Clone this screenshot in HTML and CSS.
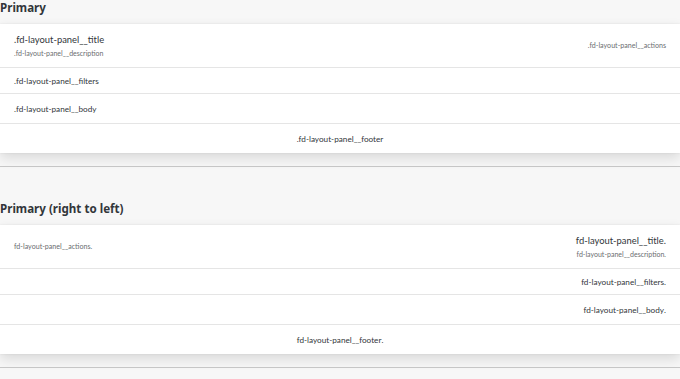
FILE: index.html
```html
<!DOCTYPE html>
<html lang="en">
<head>
  <meta charset="UTF-8">
  <title>Layout Panel</title>
  <link rel="stylesheet" href="styles.css">
</head>
<body>

<section class="example">
  <h3>Primary</h3>
  <div class="fd-layout-panel">
    <div class="fd-layout-panel__header">
      <div class="fd-layout-panel__head">
        <h4 class="fd-layout-panel__title">.fd-layout-panel__title</h4>
        <p class="fd-layout-panel__description">.fd-layout-panel__description</p>
      </div>
      <div class="fd-layout-panel__actions">.fd-layout-panel__actions</div>
    </div>
    <div class="fd-layout-panel__filters">.fd-layout-panel__filters</div>
    <div class="fd-layout-panel__body">.fd-layout-panel__body</div>
    <div class="fd-layout-panel__footer">.fd-layout-panel__footer</div>
  </div>
</section>

<section class="example">
  <h3>Primary (right to left)</h3>
  <div class="fd-layout-panel" dir="rtl">
    <div class="fd-layout-panel__header">
      <div class="fd-layout-panel__head">
        <h4 class="fd-layout-panel__title">.fd-layout-panel__title</h4>
        <p class="fd-layout-panel__description">.fd-layout-panel__description</p>
      </div>
      <div class="fd-layout-panel__actions">.fd-layout-panel__actions</div>
    </div>
    <div class="fd-layout-panel__filters">.fd-layout-panel__filters</div>
    <div class="fd-layout-panel__body">.fd-layout-panel__body</div>
    <div class="fd-layout-panel__footer">.fd-layout-panel__footer</div>
  </div>
</section>

</body>
</html>
```

FILE: styles.css
```css
body {
  font-family: 'Lato', 'Noto Sans', sans-serif;
  margin: 0;
  background: #f7f7f7;
  color: #32363a;
}
.example {
  padding-bottom: 13px;
  border-bottom: 1px solid #c8c8c8;
  margin-bottom: 34px;
}
.example h3 {
  font-family: 'Noto Sans', sans-serif;
  font-size: 11.6px;
  font-weight: 700;
  line-height: 15px;
  margin: 0 0 9px;
}
.fd-layout-panel {
  background: #fff;
  box-shadow: 0 0 2px rgba(0,0,0,0.08), 0 5px 12px rgba(0,0,0,0.12);
}
.fd-layout-panel__header {
  display: flex;
  align-items: center;
  justify-content: space-between;
  height: 43px;
  padding: 0 14px;
  border-bottom: 1px solid #e5e5e5;
}
.fd-layout-panel__title {
  margin: 0;
  font-size: 9.4px;
  font-weight: 400;
  line-height: 14px;
}
.fd-layout-panel__description {
  margin: 2px 0 0;
  font-size: 7px;
  line-height: 9px;
  color: #6a6d70;
}
.fd-layout-panel__actions {
  font-size: 7.1px;
  color: #6a6d70;
}
.fd-layout-panel__filters,
.fd-layout-panel__body,
.fd-layout-panel__footer {
  display: flex;
  align-items: center;
  padding: 0 14px;
  font-size: 8.2px;
}
.fd-layout-panel__filters {
  height: 25px;
  border-bottom: 1px solid #e5e5e5;
}
.fd-layout-panel__body {
  height: 29px;
  border-bottom: 1px solid #e5e5e5;
}
.fd-layout-panel__footer {
  height: 29px;
  justify-content: center;
}
```
